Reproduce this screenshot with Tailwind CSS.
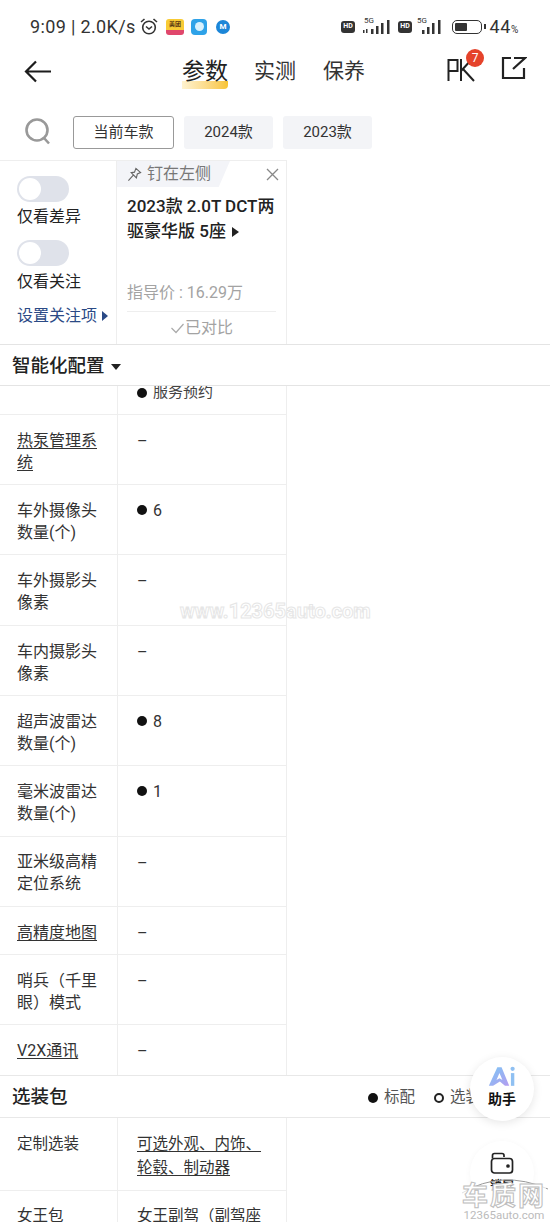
<!DOCTYPE html>
<html>
<head>
  <title>参数配置</title>
  <script src="https://cdn.jsdelivr.net/npm/@tailwindcss/browser@4"></script>
</head>
<body class="bg-white">
  <div class="relative w-[550px] h-[1222px] overflow-hidden bg-white text-[#222] font-['Roboto','Noto_Sans_CJK_SC',sans-serif]">

    <!-- status bar -->
    <div class="h-[50px] flex items-center pl-[30px] pt-[3px] text-[#333]">
      <span class="w-[107px] whitespace-nowrap text-[18px] tracking-[0.35px]">9:09 | 2.0K/s</span>
      <svg class="ml-[3px]" width="18" height="17" viewBox="0 0 18 17" fill="none" stroke="#333" stroke-width="1.600"><circle cx="9" cy="9.500" r="6.300"/><path d="M6 8.500 9 11l3-2.500M1 4 4.500 1M17 4l-3.500-3"/></svg>
      <div class="ml-[8px] w-[18px] h-[16px] rounded-[3px] bg-[#f8cb35] border-b-[5px] border-[#e0476c] flex items-center justify-center text-[6px] leading-none font-bold text-[#5b3a12]">美团</div>
      <div class="ml-[7px] w-[16px] h-[16px] rounded-[4px] bg-[#2ea2e8] flex items-center justify-center"><div class="w-[9px] h-[9px] rounded-full bg-[#d8f1fd]"></div></div>
      <div class="ml-[9px] w-[14px] h-[14px] rounded-full bg-[#1c86d8] text-white text-[8px] font-bold flex items-center justify-center">M</div>
      <div class="ml-[111px] w-[14px] h-[12px] rounded-[3px] bg-[#333] text-white text-[7px] font-bold flex items-center justify-center">HD</div>
      <div class="relative ml-[7px] w-[30px] h-[16px]">
        <span class="absolute left-[2px] top-[-2px] text-[8px] leading-[8px] text-[#333]">5G</span>
        <svg class="absolute left-0 top-0" width="30" height="16" viewBox="0 0 30 16" fill="#333"><rect x="1" y="11" width="1.500" height="3"/><rect x="4" y="10" width="1.500" height="4"/><rect x="9" y="10" width="2.500" height="5"/><rect x="14" y="7" width="2.500" height="8"/><rect x="19" y="4" width="2.500" height="11"/><rect x="25" y="1" width="2.500" height="14"/></svg>
      </div>
      <div class="ml-[6px] w-[14px] h-[12px] rounded-[3px] bg-[#333] text-white text-[7px] font-bold flex items-center justify-center">HD</div>
      <div class="relative ml-[5px] w-[30px] h-[16px]">
        <span class="absolute left-[0px] top-[-2px] text-[8px] leading-[8px] text-[#333]">5G</span>
        <svg class="absolute left-0 top-0" width="30" height="16" viewBox="0 0 30 16" fill="#333"><rect x="5" y="11" width="2.500" height="4"/><rect x="10" y="8" width="2.500" height="7"/><rect x="15" y="4" width="2.500" height="11"/><rect x="21" y="1" width="2.500" height="14"/></svg>
      </div>
      <div class="ml-[5px] w-[30px] h-[14px] rounded-[5px] border-[1.500px] border-[#333] p-[2px]"><div class="w-[12px] h-full bg-[#333] rounded-[1px]"></div></div>
      <div class="ml-[2px] w-[1.500px] h-[5px] bg-[#333]"></div>
      <span class="ml-[4px] text-[18px] tracking-[0.6px] whitespace-nowrap">44<span class="text-[10px]">%</span></span>
    </div>

    <!-- nav -->
    <div class="relative h-[47px] flex items-center pl-[182px] pb-[4px]">
      <svg class="absolute left-[24px] top-[10px]" width="28" height="23" viewBox="0 0 28 23" fill="none" stroke="#1c1c1c" stroke-width="2.200"><path d="M27 11.500H2M12 1.500 2 11.500l10 10"/></svg>
      <div class="flex items-center gap-[26px] text-[21px] text-[#333] leading-none">
        <div class="relative"><span class="relative z-10 text-[#222] text-[23px]">参数</span><div class="absolute left-0 right-0 bottom-[-6px] h-[8px] rounded-br-[4px] bg-gradient-to-r from-[#fff3cf] to-[#f8c431]"></div></div>
        <span>实测</span>
        <span class="ml-[1px]">保养</span>
      </div>
      <svg class="absolute left-[447px] top-[8px]" width="28" height="24" viewBox="0 0 28 24" fill="none" stroke="#222" stroke-width="2"><path d="M1.500 23V2H10.500V13H1.500M14 1V23M14 13 25 1M16 11 27 23"/></svg>
      <div class="absolute left-[466px] top-[-1px] w-[18px] h-[18px] rounded-full bg-[#e5432b] text-white text-[12px] flex items-center justify-center">7</div>
      <svg class="absolute left-[501px] top-[6px]" width="26" height="24" viewBox="0 0 26 24" fill="none" stroke="#222" stroke-width="2.200"><path d="M10 2H2V22H23V12M13 2H24L12 13"/></svg>
    </div>

    <!-- filter row -->
    <div class="h-[63px] flex items-center pl-[24px] pt-[7px]">
      <svg width="28" height="30" viewBox="0 0 28 30" fill="none" stroke="#999" stroke-width="2.600"><circle cx="13" cy="13" r="10.500"/><path d="m20 21 5 5.500"/></svg>
      <div class="ml-[21px] w-[101px] h-[33px] rounded-[3px] border border-[#999] text-[15px] text-[#333] flex items-center justify-center">当前车款</div>
      <div class="ml-[10px] w-[89px] h-[33px] rounded-[3px] bg-[#f3f4f7] text-[15px] text-[#333] flex items-center justify-center">2024款</div>
      <div class="ml-[10px] w-[89px] h-[33px] rounded-[3px] bg-[#f3f4f7] text-[15px] text-[#333] flex items-center justify-center">2023款</div>
    </div>

    <!-- car header -->
    <div class="flex h-[184px] w-[287px] border-t border-r border-[#eee]">
      <div class="w-[117px] border-r border-[#eee] pl-[17px] pt-[15px]">
        <div class="w-[52px] h-[26px] rounded-full bg-[#dfe2ea] p-[2px]"><div class="w-[22px] h-[22px] rounded-full bg-white"></div></div>
        <div class="mt-[3px] text-[16px] leading-[24px] text-[#222]">仅看差异</div>
        <div class="mt-[11px] w-[52px] h-[26px] rounded-full bg-[#dfe2ea] p-[2px]"><div class="w-[22px] h-[22px] rounded-full bg-white"></div></div>
        <div class="mt-[4px] text-[16px] leading-[24px] text-[#222]">仅看关注</div>
        <div class="mt-[10px] flex items-center text-[16px] leading-[24px] text-[#2b4a86] whitespace-nowrap">设置关注项<span class="ml-[5px] w-0 h-0 border-y-[5px] border-y-transparent border-l-[6px] border-l-[#2b4a86]"></span></div>
      </div>
      <div class="flex-1 relative px-[10px]">
        <div class="absolute left-0 top-0 w-[113px] h-[26px] bg-[#f3f4f8] [clip-path:polygon(0_0,100%_0,90%_100%,0_100%)] flex items-center pl-[10px] text-[16px] text-[#777] whitespace-nowrap">
          <svg width="15" height="15" viewBox="0 0 16 16" fill="none" stroke="#666" stroke-width="1.200"><path d="M9.500 1.500 14.500 6 11 7.500 10 11.500 4.500 6 8 5.500ZM6.500 9 1.500 14.500"/></svg>
          <span class="ml-[5px]">钉在左侧</span>
        </div>
        <svg class="absolute right-[7px] top-[7px]" width="13" height="13" viewBox="0 0 13 13" fill="none" stroke="#888" stroke-width="1.300"><path d="m1 1 11 11M12 1 1 12"/></svg>
        <div class="pt-[33px] h-[120px] text-[17px] leading-[25px] font-medium text-[#222]">
          <div class="whitespace-nowrap">2023款 2.0T DCT两</div>
          <div class="flex items-center whitespace-nowrap">驱豪华版 5座<span class="ml-[6px] w-0 h-0 border-y-[5px] border-y-transparent border-l-[7px] border-l-[#222]"></span></div>
        </div>
        <div class="text-[16px] leading-[24px] text-[#a3a3a3] whitespace-nowrap">指导价 : 16.29万</div>
        <div class="mt-[6px] pt-[4px] border-t border-[#eee] flex items-center justify-center text-[16px] leading-[24px] text-[#a3a3a3]">
          <svg width="15" height="11" viewBox="0 0 14 11" fill="none" stroke="#aaa" stroke-width="1.200"><path d="m1 5 4.500 4.500L13 1"/></svg>已对比
        </div>
      </div>
    </div>

    <!-- section title -->
    <div class="h-[42px] border-y border-[#e4e4e4] flex items-center pl-[12px] pt-[3px] text-[18.500px] font-medium text-[#222]">智能化配置<span class="ml-[6px] w-0 h-0 border-x-[5px] border-x-transparent border-t-[6px] border-t-[#222]"></span></div>

    <!-- rows -->
    <div class="w-[287px] border-r border-[#eee] text-[16px] leading-[22px] text-[#333]">
      <div class="flex h-[29px] border-b border-[#eee] overflow-hidden">
        <div class="w-[118px] border-r border-[#eee]"></div>
        <div class="flex items-start pl-[19px] mt-[-5px]"><span class="mt-[7px] w-[10px] h-[10px] rounded-full bg-[#111]"></span><span class="ml-[6px] text-[#444] text-[15px]">服务预约</span></div>
      </div>
      <div class="flex h-[70px] border-b border-[#eee]">
        <div class="w-[118px] border-r border-[#eee] pl-[17px] pr-[12px] pt-[15px] underline underline-offset-2">热泵管理系统</div>
        <div class="pl-[19px] pt-[16px]">–</div>
      </div>
      <div class="flex h-[70px] border-b border-[#eee]">
        <div class="w-[118px] border-r border-[#eee] pl-[17px] pr-[12px] pt-[15px]">车外摄像头数量(个)</div>
        <div class="pl-[19px] pt-[15px] flex items-start"><span class="mt-[5px] w-[10px] h-[10px] rounded-full bg-[#111]"></span><span class="ml-[6px]">6</span></div>
      </div>
      <div class="flex h-[71px] border-b border-[#eee]">
        <div class="w-[118px] border-r border-[#eee] pl-[17px] pr-[12px] pt-[15px]">车外摄影头像素</div>
        <div class="pl-[19px] pt-[16px]">–</div>
      </div>
      <div class="flex h-[70px] border-b border-[#eee]">
        <div class="w-[118px] border-r border-[#eee] pl-[17px] pr-[12px] pt-[15px]">车内摄影头像素</div>
        <div class="pl-[19px] pt-[16px]">–</div>
      </div>
      <div class="flex h-[70px] border-b border-[#eee]">
        <div class="w-[118px] border-r border-[#eee] pl-[17px] pr-[12px] pt-[15px]">超声波雷达数量(个)</div>
        <div class="pl-[19px] pt-[15px] flex items-start"><span class="mt-[5px] w-[10px] h-[10px] rounded-full bg-[#111]"></span><span class="ml-[6px]">8</span></div>
      </div>
      <div class="flex h-[71px] border-b border-[#eee]">
        <div class="w-[118px] border-r border-[#eee] pl-[17px] pr-[12px] pt-[15px]">毫米波雷达数量(个)</div>
        <div class="pl-[19px] pt-[15px] flex items-start"><span class="mt-[5px] w-[10px] h-[10px] rounded-full bg-[#111]"></span><span class="ml-[6px]">1</span></div>
      </div>
      <div class="flex h-[70px] border-b border-[#eee]">
        <div class="w-[118px] border-r border-[#eee] pl-[17px] pr-[12px] pt-[14px]">亚米级高精定位系统</div>
        <div class="pl-[19px] pt-[16px]">–</div>
      </div>
      <div class="flex h-[48px] border-b border-[#eee]">
        <div class="w-[118px] border-r border-[#eee] pl-[17px] pr-[12px] pt-[15px] underline underline-offset-2">高精度地图</div>
        <div class="pl-[19px] pt-[16px]">–</div>
      </div>
      <div class="flex h-[70px] border-b border-[#eee]">
        <div class="w-[118px] border-r border-[#eee] pl-[17px] pr-[12px] pt-[15px]">哨兵（千里眼）模式</div>
        <div class="pl-[19px] pt-[16px]">–</div>
      </div>
      <div class="flex h-[50px]">
        <div class="w-[118px] border-r border-[#eee] pl-[17px] pr-[12px] pt-[15px] underline underline-offset-2">V2X通讯</div>
        <div class="pl-[19px] pt-[16px]">–</div>
      </div>
    </div>

    <!-- options section -->
    <div class="h-[43px] border-y border-[#e8e8e8] flex items-center pl-[12px] pr-[69px] pt-[3px]">
      <span class="text-[18.500px] font-medium text-[#222]">选装包</span>
      <div class="ml-auto flex items-center text-[15.500px] text-[#555] whitespace-nowrap">
        <span class="w-[10px] h-[10px] rounded-full bg-[#111]"></span><span class="ml-[6px]">标配</span>
        <span class="ml-[19px] w-[10px] h-[10px] rounded-full border-[2px] border-[#222]"></span><span class="ml-[6px]">选装</span>
      </div>
    </div>
    <div class="w-[287px] border-r border-[#eee] text-[15.500px] leading-[24px] text-[#333]">
      <div class="flex h-[73px] border-b border-[#eee]">
        <div class="w-[118px] border-r border-[#eee] pl-[17px] pt-[14px]">定制选装</div>
        <div class="flex-1 pl-[19px] pr-[10px] pt-[14px] underline underline-offset-2">可选外观、内饰、轮毂、制动器</div>
      </div>
      <div class="flex h-[40px]">
        <div class="w-[118px] border-r border-[#eee] pl-[17px] pt-[13px]">女王包</div>
        <div class="flex-1 pl-[19px] pt-[13px] whitespace-nowrap">女王副驾（副驾座</div>
      </div>
    </div>

    <!-- watermark -->
    <div class="absolute left-[180px] top-[601px] text-[20px] leading-[20px] font-bold text-white [-webkit-text-stroke:1px_#e6e6e6] whitespace-nowrap">www.12365auto.com</div>

    <!-- floating buttons -->
    <div class="absolute left-[470px] top-[1057px] w-[64px] h-[64px] rounded-full bg-white shadow-[0_2px_10px_rgba(0,0,0,0.10)] flex flex-col items-center pt-[9px]">
      <svg width="28" height="21" viewBox="0 0 33 24"><defs><linearGradient id="ai" x1="0" y1="0" x2="1" y2="1"><stop offset="0" stop-color="#7cc8f5"/><stop offset="1" stop-color="#b49cf0"/></linearGradient></defs><path d="M11 1h5l9 22h-5l-6-5-8 5H1Z" fill="url(#ai)"/><path d="m13.500 8-3.500 8 3.500-2 3.500 2Z" fill="#fff"/><rect x="27" y="8" width="4" height="15" fill="#8fc0f2"/><circle cx="29" cy="3" r="2.500" fill="#8fc0f2"/></svg>
      <div class="mt-[4px] text-[14px] leading-[17px] font-bold text-[#111]">助手</div>
    </div>
    <div class="absolute left-[470px] top-[1141px] w-[64px] h-[64px] rounded-full bg-white shadow-[0_1px_6px_rgba(0,0,0,0.04)] flex flex-col items-center pt-[11px]">
      <svg width="24" height="23" viewBox="0 0 24 23" fill="none" stroke="#222" stroke-width="1.700"><path d="M2.500 6.500V3.500Q2.500 1.500 4.500 1.500H12Q14 1.500 14 3.500V5"/><rect x="1.500" y="6.500" width="21" height="14.500" rx="3"/><circle cx="18" cy="14" r="1" fill="#222"/></svg>
      <div class="mt-[4px] text-[12px] leading-[14px] font-bold text-[#222]">锁屏</div>
    </div>
    <svg class="absolute left-[460px] top-[1175px]" width="90" height="20" viewBox="0 0 90 20" fill="none" stroke="#999" stroke-width="1"><path d="M2 18Q42 -6 88 14"/></svg>
    <div class="absolute left-[462px] top-[1186px] w-[84px] flex flex-col items-center bg-white/70">
      <div class="text-[26px] leading-[20px] font-bold text-white [-webkit-text-stroke:1px_#bdbdbd] tracking-[2px] whitespace-nowrap">车质网</div>
      <div class="mt-[3px] text-[11.500px] leading-[12px] text-[#bbb] whitespace-nowrap">12365auto.com</div>
    </div>
  </div>
</body>
</html>
